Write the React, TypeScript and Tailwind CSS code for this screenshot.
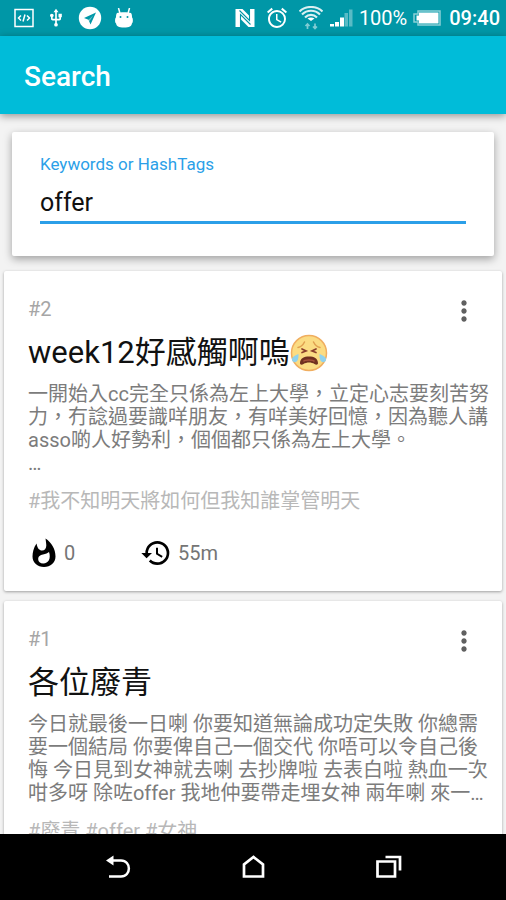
import React from 'react';
import { MdAlarm, MdHistory, MdMoreVert, MdUsb } from 'react-icons/md';

type Post = {
  id: number;
  title: string;
  crying?: boolean;
  lines: string[];
  tags: string;
  stats?: { likes: string; age: string };
};

const posts: Post[] = [
  {
    id: 2,
    title: 'week12好感觸啊嗚',
    crying: true,
    lines: [
      '一開始入cc完全只係為左上大學，立定心志要刻苦努',
      '力，冇諗過要識咩朋友，有咩美好回憶，因為聽人講',
      'asso啲人好勢利，個個都只係為左上大學。',
      '…',
    ],
    tags: '#我不知明天將如何但我知誰掌管明天',
    stats: { likes: '0', age: '55m' },
  },
  {
    id: 1,
    title: '各位廢青',
    lines: [
      '今日就最後一日喇 你要知道無論成功定失敗 你總需',
      '要一個結局 你要俾自己一個交代 你唔可以令自己後',
      '悔 今日見到女神就去喇 去抄牌啦 去表白啦 熱血一次',
      '咁多呀 除咗offer 我地仲要帶走埋女神 兩年喇 來一…',
    ],
    tags: '#廢青 #offer #女神',
  },
];

function CodeIcon() {
  return (
    <svg className="h-5 w-5" viewBox="0 0 20 20" fill="none" stroke="currentColor" strokeWidth="1.5">
      <rect x="1" y="1.5" width="18" height="17" />
      <path d="M7 7.5 4.5 10 7 12.5M13 7.5l2.5 2.5-2.5 2.5M11 6.5l-2 7" />
    </svg>
  );
}

function TelegramIcon() {
  return (
    <svg className="h-6 w-6" viewBox="0 0 24 24">
      <circle cx="12" cy="12" r="11.2" fill="#fff" />
      <path d="M18 6.5 6 12l4.5 1.8 2 4.7z" fill="#0097a7" />
      <path d="m10.5 13.8 4.8-4.6-3.8 6z" fill="#fff" opacity=".4" />
    </svg>
  );
}

function BugdroidIcon() {
  return (
    <svg className="h-5 w-5" viewBox="0 0 20 20">
      <path d="m4.500 0 1.500 5.500M15.500 0 14 5.500" stroke="#fff" strokeWidth="1.5" />
      <path
        d="M3 5C5.500 4 14.500 4 17 5c1 1 1 3.500 1 4.500 1.200.3 1.200 5.500 0 5.800-.5 3-2.500 4.200-8 4.200s-7.500-1.200-8-4.200c-1.200-.3-1.200-5.500 0-5.800 0-1 0-3.500 1-4.500z"
        fill="#fff"
      />
      <circle cx="6.500" cy="9" r="1" fill="#0097a7" />
      <circle cx="13.500" cy="9" r="1" fill="#0097a7" />
    </svg>
  );
}

function NfcIcon() {
  return (
    <svg className="h-5 w-5" viewBox="0 0 20 20">
      <path d="M.5 1h7l7 7V1h5v18h-6l-8-8v8h-5z" fill="#fff" />
      <path d="M5.5 19V6.500l10 10M14.500 1v11.500l-10-10" fill="none" stroke="#0097a7" strokeWidth="1.1" />
    </svg>
  );
}

function WifiIcon() {
  return (
    <svg className="h-6 w-6" viewBox="0 0 24 24" fill="none" stroke="#fff">
      <path
        d="M.5 5.500C6.500-.5 17.500-.5 23.500 5.500M3 8.500C8 3.500 16 3.500 21 8.500M6 11.500c3.500-3.500 8.500-3.500 12 0"
        strokeWidth="2.2"
        opacity=".85"
      />
      <path d="M8.500 12.500c2-1.500 5-1.500 7 0L12 15z" fill="#fff" stroke="none" />
      <path d="M8.500 23v-5M6.500 20l2-2 2 2M16 17.500v5M14 20.500l2 2 2-2" strokeWidth="1.7" opacity=".5" />
    </svg>
  );
}

function SignalIcon() {
  return (
    <svg className="h-5 w-6" viewBox="0 0 24 20" fill="#fff">
      <path d="M1 16h4v2.500H1zM6 14h4v4.500H6zM11 9.500h4v9h-4z" />
      <path d="M15.500 5h3.500v13.500h-3.500zM20 1.500h3.500v17H20z" opacity=".35" />
    </svg>
  );
}

function BatteryIcon() {
  return (
    <svg className="h-4 w-7" viewBox="0 0 28 16">
      <path d="M5 1h22v14H5v-3H1V4h4z" fill="none" stroke="#fff" strokeWidth="1.5" opacity=".55" />
      <path d="M6 2.500h19.500v11H6v-3H3.500v-5H6z" fill="#fff" />
    </svg>
  );
}

// flame with a wide hollow centre
function FlameIcon() {
  return (
    <svg className="size-8" viewBox="0 0 32 32">
      <path
        fillRule="evenodd"
        d="M17.500 1.500c.4 3 .8 5 .8 7 0 3-1.700 5-4.300 5S9.500 11.500 8.500 6.500C5.500 11 4.500 15.500 4.500 19.500c0 6 5 10.500 11.500 10.500s11.500-4.500 11.500-10.500c0-7.500-4-14-10-18zM21 15c2.200 6.500-.5 11.500-5.800 11.500-3 0-5-1.800-5-4.200 0-3.200 2-4.300 4.800-4.800 2.800-.5 4.600-1.200 6-2.500z"
        fill="#000"
      />
    </svg>
  );
}

function CryingFace() {
  return (
    <svg className="h-[38px] w-[38px]" viewBox="0 0 38 38" role="img" aria-label="crying">
      <circle cx="19" cy="19" r="17.500" fill="#fbdc83" stroke="#f0ae60" strokeWidth="1.5" />
      <path
        d="M8 13.500c3-.5 5-2.500 6.500-5.500M30 13.500c-3-.5-5-2.500-6.500-5.500"
        fill="none"
        stroke="#e0a050"
        strokeWidth="1.5"
        strokeLinecap="round"
      />
      <path
        d="m12 15 4 2-4 1.500M26 15l-4 2 4 1.500"
        fill="none"
        stroke="#8a3f2c"
        strokeWidth="1.7"
        strokeLinecap="round"
      />
      <path d="M10 29c.3-5 4-6.500 9-6.500s8.700 1.500 9 6.500c.1 2-2 2-3.500 1-3-2-8-2-11 0-1.500 1-3.600 1-3.500-1z" fill="#70301f" />
      <path d="M13.500 27.500c1-2 9.500-2 11 0" fill="none" stroke="#a5513c" strokeWidth="1.5" />
      <path
        d="M8.500 20C5 21.500 1.500 23 2 26c.4 2.500 4 3 5.500.5 1-1.800 1-4 1-6.500zM29.500 20c3.500 1.500 7 3 6.500 6-.4 2.500-4 3-5.500.5-1-1.800-1-4-1-6.500z"
        fill="#8fd2ee"
      />
    </svg>
  );
}

function StatusBar() {
  return (
    <div className="flex h-9 shrink-0 items-center justify-between bg-[#0097a7] pr-1.5 pl-3.5 text-xl text-white">
      <div className="flex items-center gap-3">
        <CodeIcon />
        <MdUsb className="size-5" />
        <TelegramIcon />
        <BugdroidIcon />
      </div>
      <div className="flex items-center gap-1.5">
        <div className="flex items-center gap-2.5">
          <NfcIcon />
          <MdAlarm className="size-6" />
          <WifiIcon />
        </div>
        <SignalIcon />
        <span>100%</span>
        <BatteryIcon />
        <span className="pl-0.5 font-medium">09:40</span>
      </div>
    </div>
  );
}

function SearchCard() {
  return (
    <section className="mx-3 mt-[18px] rounded-xs bg-white px-7 pt-5 pb-8 shadow-[0_3px_8px_rgba(0,0,0,0.35)]">
      <label htmlFor="keywords" className="block text-[17px] leading-6 text-[#2b9fe8]">
        Keywords or HashTags
      </label>
      <input
        id="keywords"
        type="text"
        defaultValue="offer"
        className="block h-12 w-full border-b-[3px] border-[#2b9fe8] bg-transparent pt-2 text-[25px] text-[#111] outline-none"
      />
    </section>
  );
}

function PostCard({ post }: { post: Post }) {
  return (
    <article className="rounded-xs bg-white pt-6 pr-3 pb-5 pl-6 shadow-[0_1px_3px_rgba(0,0,0,0.35)]">
      <header className="flex h-8 items-start justify-between text-xl text-[#a6a6a6]">
        <span className="leading-7">#{post.id}</span>
        <button type="button" aria-label="More" className="mr-2.5 text-[#606060]">
          <MdMoreVert className="size-8" />
        </button>
      </header>
      <h2 className="mt-1 flex h-11 items-center text-[31px] text-[#111]">
        {post.title}
        {post.crying && <CryingFace />}
      </h2>
      <p className="mt-2 text-xl leading-[23px] whitespace-pre text-[#7c7c7c]">{post.lines.join('\n')}</p>
      <p className="mt-3 text-xl leading-7 text-[#b8b8b8]">{post.tags}</p>
      {post.stats && (
        <footer className="mt-5 flex h-9 items-center text-xl text-[#757575]">
          <span className="flex w-28 items-center gap-1">
            <FlameIcon />
            {post.stats.likes}
          </span>
          <span className="flex items-center gap-1.5">
            <MdHistory className="size-8 text-black" />
            {post.stats.age}
          </span>
        </footer>
      )}
    </article>
  );
}

function NavBar() {
  return (
    <nav className="flex h-[66px] shrink-0 items-center justify-center gap-[107px] bg-black text-white">
      <button type="button" aria-label="Back">
        <svg className="size-7" viewBox="0 0 28 28" fill="none" stroke="currentColor" strokeWidth="2.5">
          <path d="M8 7.500h9c10.500 0 10.500 16 0 16H5" />
          <path d="M9.500 2.500v10L2 7.500z" fill="currentColor" stroke="none" />
        </svg>
      </button>
      <button type="button" aria-label="Home">
        <svg className="size-7" viewBox="0 0 28 28" fill="none" stroke="currentColor" strokeWidth="2.7">
          <path d="M5 23.500V11.500L14.500 4l9.500 7.500v12z" />
        </svg>
      </button>
      <button type="button" aria-label="Recent apps">
        <svg className="size-7" viewBox="0 0 28 28" fill="none" stroke="currentColor" strokeWidth="2.7">
          <path d="M3.500 8.500h17.500v15H3.500zM11.500 4h14.500v13.500" />
        </svg>
      </button>
    </nav>
  );
}

export default function App() {
  return (
    <div className="flex h-screen flex-col overflow-hidden bg-[#f3f3f3] font-[Roboto,'Noto_Sans_CJK_TC',sans-serif]">
      <StatusBar />
      <header className="relative flex h-[78px] shrink-0 items-center bg-[#00bcd9] px-6 shadow-[0_2px_8px_rgba(0,0,0,0.4)]">
        <h1 className="pt-1 text-[28px] font-medium text-white">Search</h1>
      </header>
      <main className="min-h-0 flex-1 overflow-hidden">
        <SearchCard />
        <div className="mx-1 mt-[15px] flex flex-col gap-2.5">
          {posts.map((post) => (
            <PostCard key={post.id} post={post} />
          ))}
        </div>
      </main>
      <NavBar />
    </div>
  );
}
